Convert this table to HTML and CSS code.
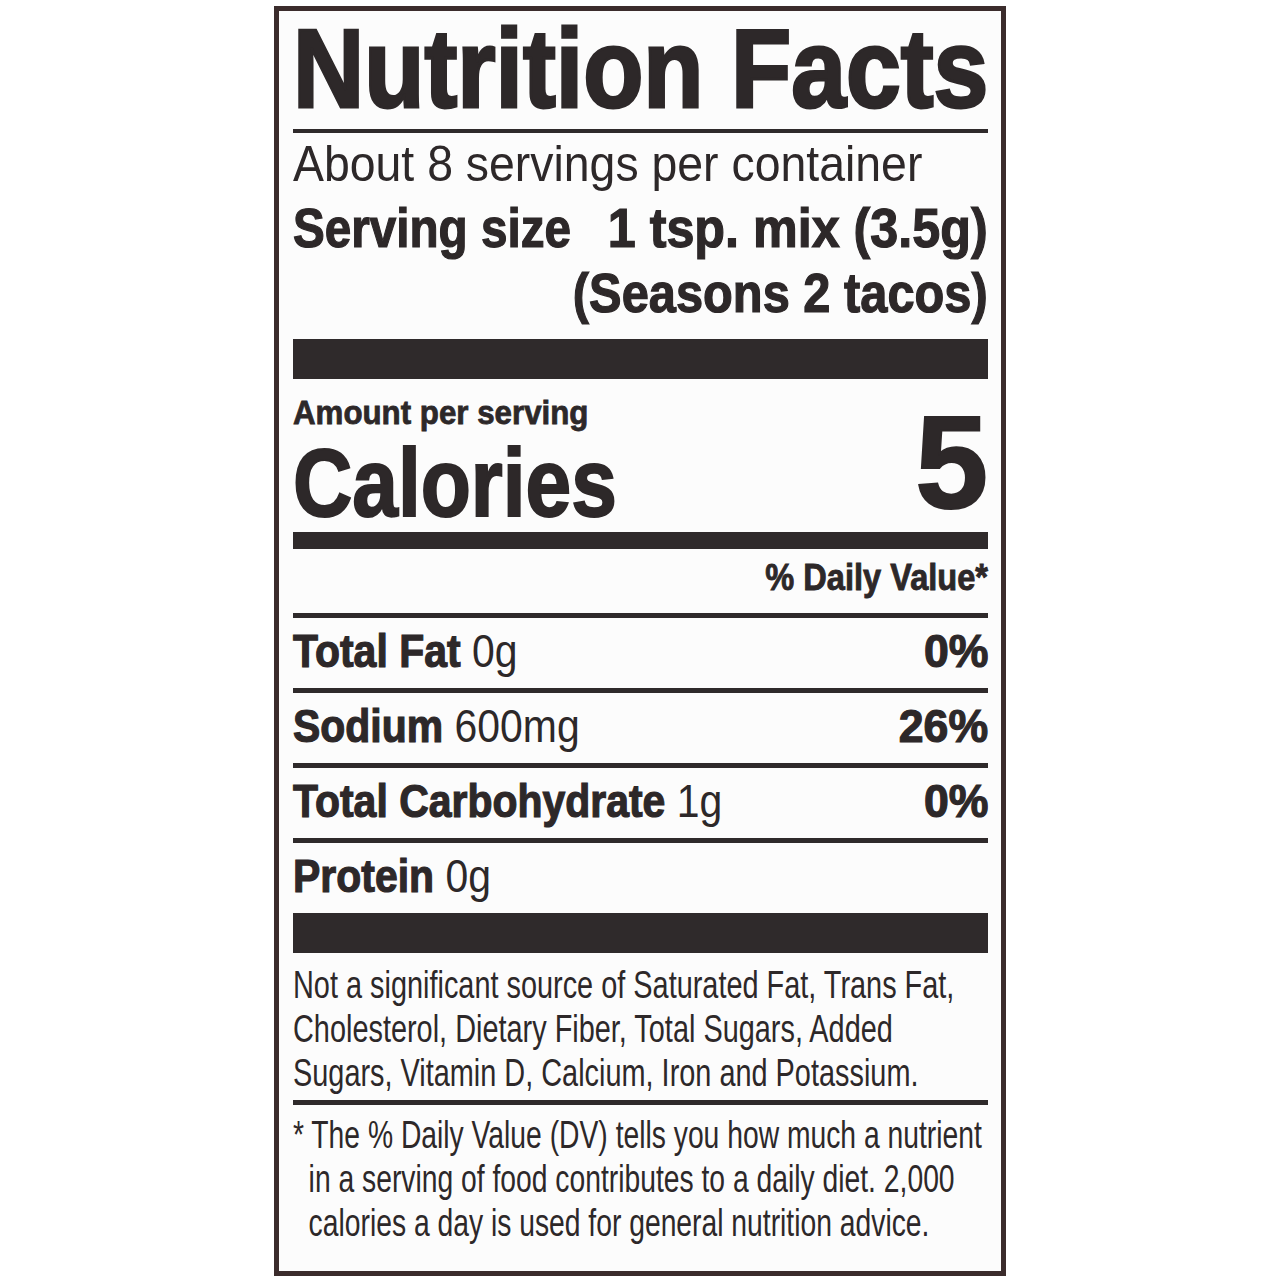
FILE: index.html
```html
<!DOCTYPE html>
<html lang="en">
<head>
<meta charset="utf-8">
<title>Nutrition Facts</title>
<link rel="stylesheet" href="styles.css">
</head>
<body>
<div class="label">
  <div class="title sx">Nutrition Facts</div>
  <div class="rule rule-title"></div>
  <div class="servings sx">About 8 servings per container</div>
  <div class="serving">
    <span class="serving-label sx">Serving size</span>
    <span class="serving-value sv1">1 tsp. mix (3.5g)</span>
    <span class="serving-value sv2">(Seasons 2 tacos)</span>
  </div>
  <div class="bar bar-thick"></div>
  <div class="cal-row">
    <div class="cal-left">
      <div class="amount sx">Amount per serving</div>
      <div class="calories sx">Calories</div>
    </div>
    <div class="cal-num">5</div>
  </div>
  <div class="bar bar-med"></div>
  <div class="dv-head"><span class="dv-text">% Daily Value*</span></div>
  <div class="rule rule-dv"></div>
  <div class="row"><span class="nut"><b>Total Fat</b> 0g</span><b class="pct">0%</b></div>
  <div class="rule"></div>
  <div class="row"><span class="nut"><b>Sodium</b> 600mg</span><b class="pct">26%</b></div>
  <div class="rule"></div>
  <div class="row"><span class="nut"><b>Total Carbohydrate</b> 1g</span><b class="pct">0%</b></div>
  <div class="rule"></div>
  <div class="row"><span class="nut"><b>Protein</b> 0g</span></div>
  <div class="bar bar-thick bar-bottom"></div>
  <p class="note sx">Not a significant source of Saturated Fat, Trans Fat,<br>Cholesterol, Dietary Fiber, Total Sugars, Added<br>Sugars, Vitamin D, Calcium, Iron and Potassium.</p>
  <div class="rule rule-note"></div>
  <p class="foot sx">* The % Daily Value (DV) tells you how much a nutrient<br>in a serving of food contributes to a daily diet. 2,000<br>calories a day is used for general nutrition advice.</p>
</div>
</body>
</html>
```

FILE: styles.css
```css
html, body {
  margin: 0;
  padding: 0;
  background: #ffffff;
}

.label {
  box-sizing: border-box;
  width: 732px;
  margin: 6px auto 0;
  border: 5px solid #3b2c2c;
  padding: 0 13px 26px 14px;
  background: #fcfcfc;
  color: #2d2829;
  font-family: "Liberation Sans", Arial, sans-serif;
}

.sx {
  white-space: nowrap;
  transform-origin: 0 50%;
}

.title {
  margin-top: 2px;
  font-weight: 700;
  font-size: 112px;
  line-height: 112px;
  transform: scaleX(.88);
  -webkit-text-stroke: 3px currentColor;
}

.rule {
  height: 5px;
  background: #2f2a2b;
}

.rule-title {
  height: 4px;
  margin-top: 4px;
}

.servings {
  margin-top: 9px;
  font-size: 50px;
  line-height: 44px;
  transform: scaleX(.928);
}

.serving {
  margin-top: 10px;
  display: grid;
  grid-template-columns: minmax(0, 1fr) auto;
  font-weight: 700;
  font-size: 55px;
  line-height: 65px;
  -webkit-text-stroke: 1.2px currentColor;
}

.serving-label {
  grid-column: 1;
  grid-row: 1;
  transform: scaleX(.866);
}

.serving-value {
  white-space: nowrap;
  justify-self: end;
  transform-origin: 100% 50%;
}

.sv1 {
  grid-column: 2;
  grid-row: 1;
  transform: scaleX(.914);
}

.sv2 {
  grid-column: 1 / -1;
  grid-row: 2;
  transform: scaleX(.887);
}

.bar {
  background: #2f2a2b;
}

.bar-thick {
  height: 40px;
  margin-top: 13px;
}

.bar-bottom {
  margin-top: 0;
}

.bar-med {
  height: 17px;
  margin-top: 9px;
}

.cal-row {
  display: flex;
  justify-content: space-between;
  align-items: flex-start;
}

.amount {
  margin-top: 16px;
  font-weight: 700;
  font-size: 34px;
  line-height: 34px;
  transform: scaleX(.92);
  -webkit-text-stroke: .8px currentColor;
}

.calories {
  margin-top: 14px;
  font-weight: 700;
  font-size: 96px;
  line-height: 80px;
  transform: scaleX(.855);
  -webkit-text-stroke: 2px currentColor;
}

.cal-num {
  margin-top: 29px;
  font-weight: 700;
  font-size: 131px;
  line-height: 110px;
  -webkit-text-stroke: 2px currentColor;
}

.dv-head {
  margin-top: 10px;
  display: flex;
  justify-content: flex-end;
  font-weight: 700;
  font-size: 37px;
  line-height: 37px;
  -webkit-text-stroke: .9px currentColor;
}

.dv-text {
  white-space: nowrap;
  transform: scaleX(.88);
  transform-origin: 100% 50%;
}

.rule-dv {
  margin-top: 17px;
}

.row {
  height: 70px;
  display: flex;
  justify-content: space-between;
  font-size: 46px;
  line-height: 66px;
}

.nut {
  white-space: nowrap;
  transform: scaleX(.89);
  transform-origin: 0 50%;
}

.nut b,
.pct {
  font-weight: 700;
  -webkit-text-stroke: 1.2px currentColor;
}

.pct {
  white-space: nowrap;
  transform: scaleX(.97);
  transform-origin: 100% 50%;
}

.note {
  margin: 10px 0 0;
  font-size: 38px;
  line-height: 44px;
  transform: scaleX(.76);
}

.rule-note {
  margin-top: 5px;
}

.foot {
  margin: 8px 0 0;
  padding-left: 21px;
  text-indent: -21px;
  font-size: 38px;
  line-height: 44px;
  transform: scaleX(.744);
}
```
